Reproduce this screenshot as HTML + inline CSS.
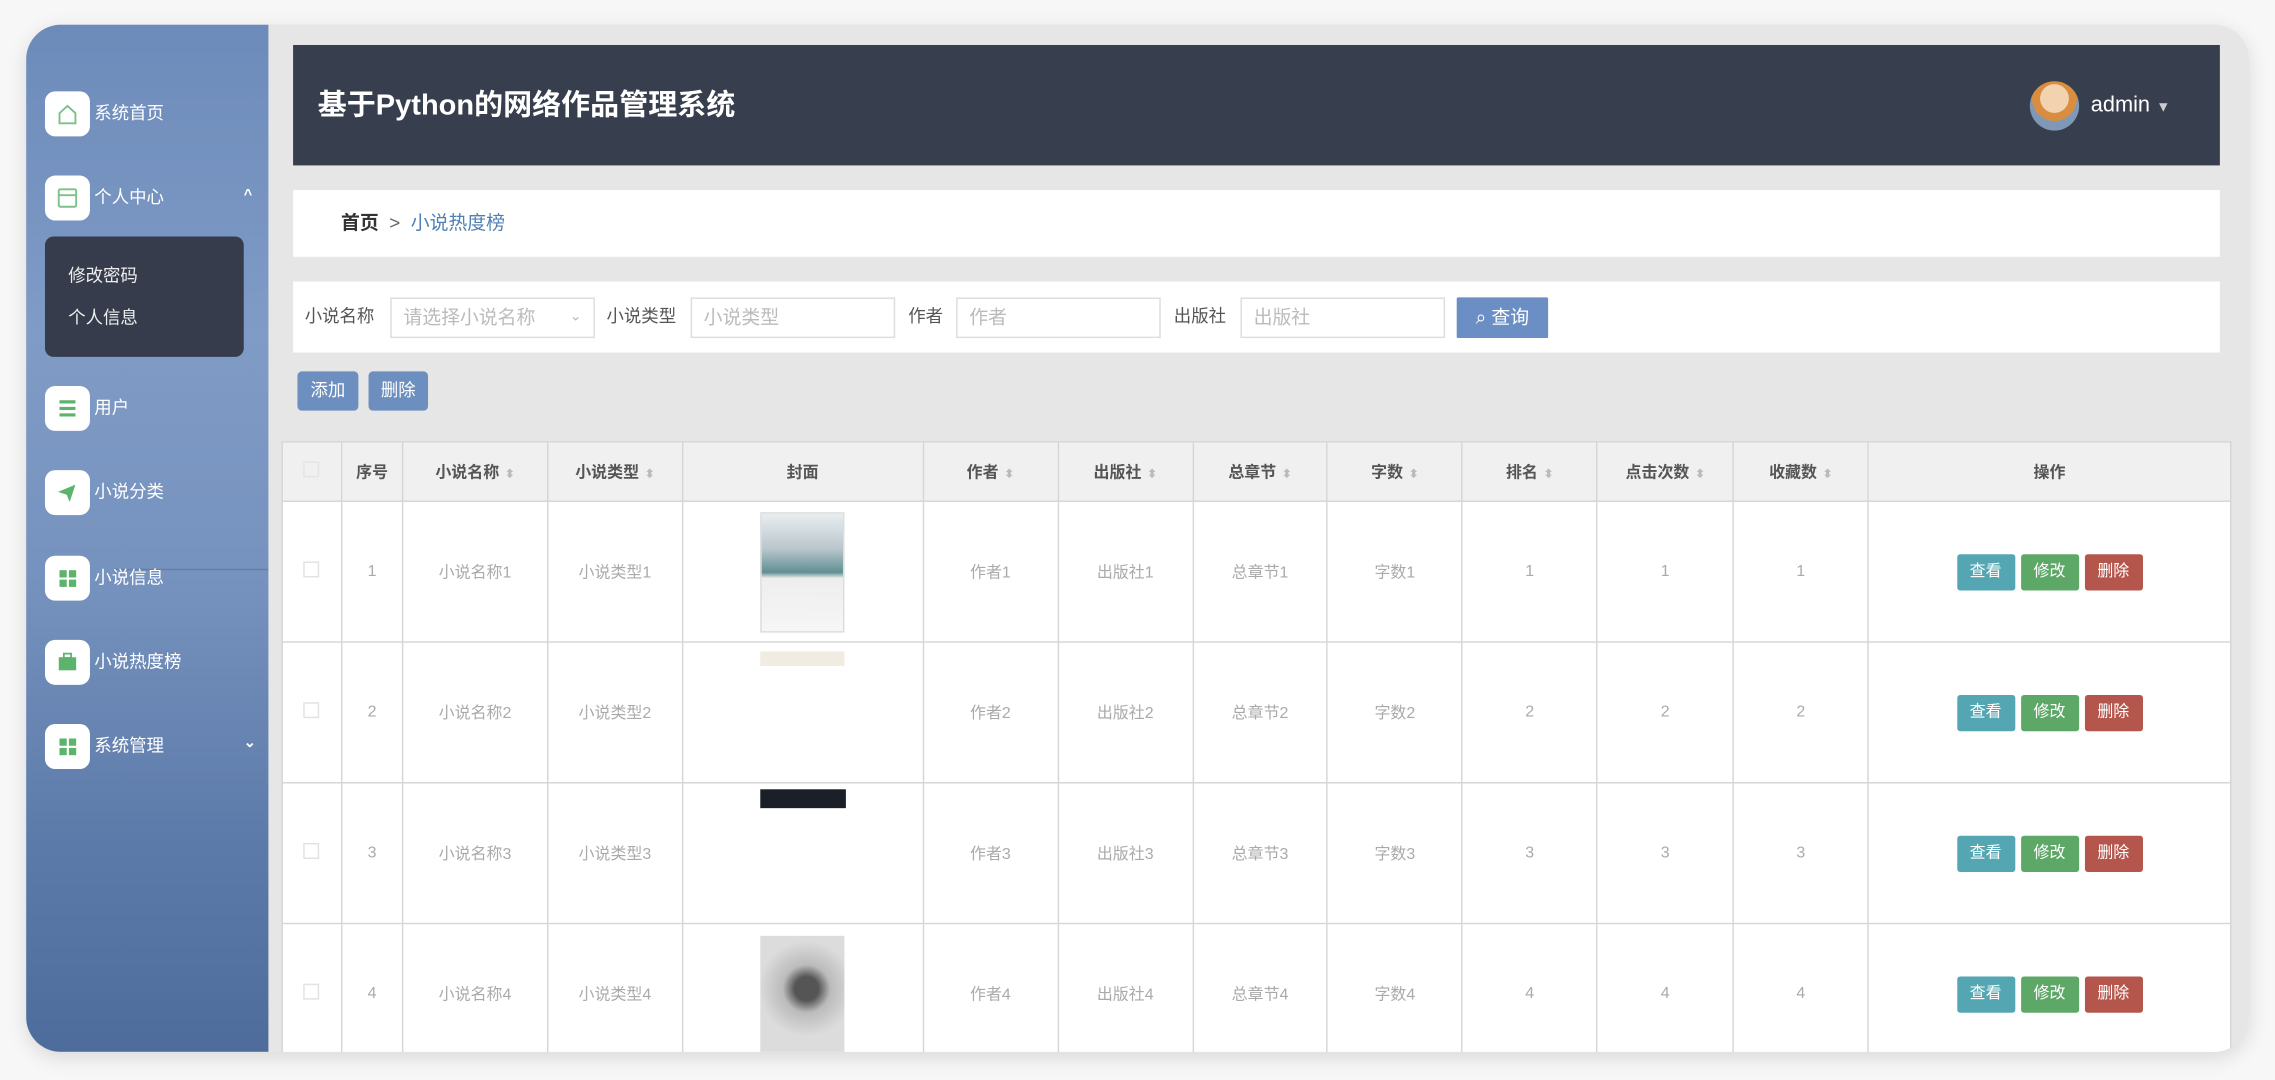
<!DOCTYPE html>
<html><head><meta charset="utf-8"><style>
*{margin:0;padding:0;box-sizing:border-box}
html,body{width:2275px;height:1080px;overflow:hidden;background:#f7f7f7}
#s{position:absolute;left:0;top:0;width:1568px;height:744px;transform:scale(1.4509);transform-origin:0 0;font-family:"Liberation Sans","Noto Sans CJK SC",sans-serif}
.win{position:absolute;left:18px;top:17px;width:1532px;height:708px;border-radius:24px;overflow:hidden;background:#e6e6e6;box-shadow:0 4px 14px rgba(0,0,0,.12)}
.side{position:absolute;left:0;top:0;width:167px;height:708px;background:linear-gradient(180deg,#6d8bba 0%,#7f9bc6 30%,#7591bd 55%,#5c7aa9 80%,#4d6c9c 100%)}
.side .rail{position:absolute;left:60px;top:375px;width:107px;height:50px;border-top:1px solid rgba(60,70,90,.25)}
.mi{position:absolute;left:13px;width:150px;height:31px;color:#fff;font-size:12px;line-height:14px}
.mi .ic{position:absolute;left:0;top:0;width:31px;height:31px;background:#fff;border-radius:7px}
.mi span{position:absolute;left:34px;top:8px}
.mi .ar{position:absolute;left:137px;top:7px;font-size:10px}
.sub{position:absolute;left:13px;top:146px;width:137px;height:83px;background:#363c4b;border-radius:6px;color:#eee;font-size:12px;line-height:14px}
.hdr{position:absolute;left:184px;top:14px;width:1328px;height:83px;background:#373e4d;color:#fff}
.hdr .t{position:absolute;left:17px;top:31px;font-size:20px;line-height:22px;font-weight:bold}
.panel{position:absolute;left:184px;width:1328px;background:#fff}
.lbl{position:absolute;font-size:12px;line-height:14px;color:#555;top:17px}
.inp{position:absolute;top:11px;height:28px;border:1px solid #ddd;font-size:13px;line-height:15px;color:#bbb;padding:5px 8px;background:#fff}
.btn{position:absolute;color:#fff;font-size:12px;text-align:center;border-radius:3px}
table{position:absolute;left:176px;top:287px;border-collapse:collapse;background:#fff;font-size:11px;color:#aaa;width:1344px}
td,th{border:1px solid #d6d6d6;text-align:center;font-weight:normal}
th{background:#f0f0f0;color:#555;height:41px;font-weight:bold}
td{height:97px}
.srt{color:#bbb;font-size:8px;margin-left:4px}
.ab{display:inline-block;width:40px;height:25px;line-height:25px;color:#fff;border-radius:2px;margin:0 2px;font-size:11px}
.cb{display:inline-block;width:11px;height:11px;border:1px solid #e2e2e2}
</style></head><body><div id="s">
<div class="win">
<div class="side">
<div class="rail"></div>
<div class="mi" style="top:46px"><div class="ic"><svg width="31" height="31" viewBox="0 0 31 31"><path d="M10 15l5.5-5 5.5 5v7h-11z" fill="none" stroke="#7cc08a" stroke-width="1.3"/></svg></div><span>系统首页</span></div>
<div class="mi" style="top:104px"><div class="ic"><svg width="31" height="31" viewBox="0 0 31 31"><rect x="9.5" y="9.5" width="12" height="12" rx="1" fill="none" stroke="#7cc08a" stroke-width="1.3"/><path d="M9.5 13.5h12" stroke="#7cc08a" stroke-width="1.3"/></svg></div><span>个人中心</span><b class="ar">^</b></div>
<div class="sub"><div style="position:absolute;left:16px;top:20px">修改密码</div><div style="position:absolute;left:16px;top:49px">个人信息</div></div>
<div class="mi" style="top:249px"><div class="ic"><svg width="31" height="31" viewBox="0 0 31 31"><path d="M10 11h11M10 15.5h11M10 20h11" stroke="#5cb36b" stroke-width="2.2"/></svg></div><span>用户</span></div>
<div class="mi" style="top:307px"><div class="ic"><svg width="31" height="31" viewBox="0 0 31 31"><path d="M9 15l12-5-4 12-2-5z" fill="#5cb36b"/></svg></div><span>小说分类</span></div>
<div class="mi" style="top:366px"><div class="ic"><svg width="31" height="31" viewBox="0 0 31 31"><g fill="#5cb36b"><rect x="10" y="10" width="5" height="5"/><rect x="16.5" y="10" width="5" height="5"/><rect x="10" y="16.5" width="5" height="5"/><rect x="16.5" y="16.5" width="5" height="5"/></g></svg></div><span>小说信息</span></div>
<div class="mi" style="top:424px"><div class="ic"><svg width="31" height="31" viewBox="0 0 31 31"><rect x="9.5" y="12" width="12" height="9" fill="#5cb36b"/><rect x="13" y="9.5" width="5" height="3" fill="none" stroke="#5cb36b" stroke-width="1.2"/></svg></div><span>小说热度榜</span></div>
<div class="mi" style="top:482px"><div class="ic"><svg width="31" height="31" viewBox="0 0 31 31"><g fill="#5cb36b"><rect x="10" y="10" width="5" height="5"/><rect x="16.5" y="10" width="5" height="5"/><rect x="10" y="16.5" width="5" height="5"/><rect x="16.5" y="16.5" width="5" height="5"/></g></svg></div><span>系统管理</span><b class="ar">⌄</b></div>
</div>
<div class="hdr"><div class="t">基于Python的网络作品管理系统</div>
<div style="position:absolute;left:1197px;top:25px;width:34px;height:34px;border-radius:50%;background:radial-gradient(circle at 50% 35%,#f3d2b0 0 35%,#d98d3f 36% 55%,#7f98b8 56%)"></div>
<div style="position:absolute;left:1239px;top:33px;font-size:15px;line-height:17px">admin <span style="font-size:10px;color:#ccc">▼</span></div></div>
<div class="panel" style="top:114px;height:46px"><div style="position:absolute;left:33px;top:15px;font-size:13px;line-height:15px;color:#333"><b>首页</b> &nbsp;<span style="color:#666">&gt;</span>&nbsp; <span style="color:#4e7fb5">小说热度榜</span></div></div>
<div class="panel" style="top:177px;height:49px">
<div class="lbl" style="left:8px">小说名称</div><div class="inp" style="left:67px;width:141px">请选择小说名称 <span style="float:right;font-size:10px">⌄</span></div>
<div class="lbl" style="left:216px">小说类型</div><div class="inp" style="left:274px;width:141px">小说类型</div>
<div class="lbl" style="left:424px">作者</div><div class="inp" style="left:457px;width:141px">作者</div>
<div class="lbl" style="left:607px">出版社</div><div class="inp" style="left:653px;width:141px">出版社</div>
<div class="btn" style="left:802px;top:11px;width:63px;height:28px;line-height:28px;background:#6b8fc4;font-size:13px;border-radius:1px">&#x2315; 查询</div>
</div>
<div class="btn" style="left:187px;top:239px;width:42px;height:27px;line-height:27px;background:#6d8fbf">添加</div>
<div class="btn" style="left:236px;top:239px;width:41px;height:27px;line-height:27px;background:#6d8fbf">删除</div>
<table>
<colgroup><col style="width:41px"><col style="width:42px"><col style="width:100px"><col style="width:93px"><col style="width:166px"><col style="width:93px"><col style="width:93px"><col style="width:93px"><col style="width:93px"><col style="width:93px"><col style="width:94px"><col style="width:93px"><col style="width:250px"></colgroup>
<tr><th><span class="cb" style="border-color:#e4e4e4"></span></th><th>序号</th><th>小说名称<span class="srt">⬍</span></th><th>小说类型<span class="srt">⬍</span></th><th>封面</th><th>作者<span class="srt">⬍</span></th><th>出版社<span class="srt">⬍</span></th><th>总章节<span class="srt">⬍</span></th><th>字数<span class="srt">⬍</span></th><th>排名<span class="srt">⬍</span></th><th>点击次数<span class="srt">⬍</span></th><th>收藏数<span class="srt">⬍</span></th><th>操作</th></tr>
<tr><td><span class="cb"></span></td><td>1</td><td>小说名称1</td><td>小说类型1</td><td><div style="margin:auto;width:58px;height:83px;border:1px solid #ddd;background:linear-gradient(180deg,#e8eef0 0,#b9c6cc 30%,#5f8f93 50%,#eeeeee 55%,#f6f6f6 100%)"></div></td><td>作者1</td><td>出版社1</td><td>总章节1</td><td>字数1</td><td>1</td><td>1</td><td>1</td><td><span class="ab" style="background:#55a6b3">查看</span><span class="ab" style="background:#5da867">修改</span><span class="ab" style="background:#b5564d">删除</span></td></tr>
<tr><td><span class="cb"></span></td><td>2</td><td>小说名称2</td><td>小说类型2</td><td style="vertical-align:top"><div style="margin:6px auto 0;width:58px;height:10px;background:#f1ece2"></div></td><td>作者2</td><td>出版社2</td><td>总章节2</td><td>字数2</td><td>2</td><td>2</td><td>2</td><td><span class="ab" style="background:#55a6b3">查看</span><span class="ab" style="background:#5da867">修改</span><span class="ab" style="background:#b5564d">删除</span></td></tr>
<tr><td><span class="cb"></span></td><td>3</td><td>小说名称3</td><td>小说类型3</td><td style="vertical-align:top"><div style="margin:4px auto 0;width:59px;height:13px;background:#1b1f28"></div></td><td>作者3</td><td>出版社3</td><td>总章节3</td><td>字数3</td><td>3</td><td>3</td><td>3</td><td><span class="ab" style="background:#55a6b3">查看</span><span class="ab" style="background:#5da867">修改</span><span class="ab" style="background:#b5564d">删除</span></td></tr>
<tr><td><span class="cb"></span></td><td>4</td><td>小说名称4</td><td>小说类型4</td><td><div style="margin:auto;width:58px;height:81px;background:radial-gradient(circle at 55% 45%,#555 0 15%,#bbb 30%,#dcdcdc 60%)"></div></td><td>作者4</td><td>出版社4</td><td>总章节4</td><td>字数4</td><td>4</td><td>4</td><td>4</td><td><span class="ab" style="background:#55a6b3">查看</span><span class="ab" style="background:#5da867">修改</span><span class="ab" style="background:#b5564d">删除</span></td></tr>
</table>
</div>
</div></body></html>
